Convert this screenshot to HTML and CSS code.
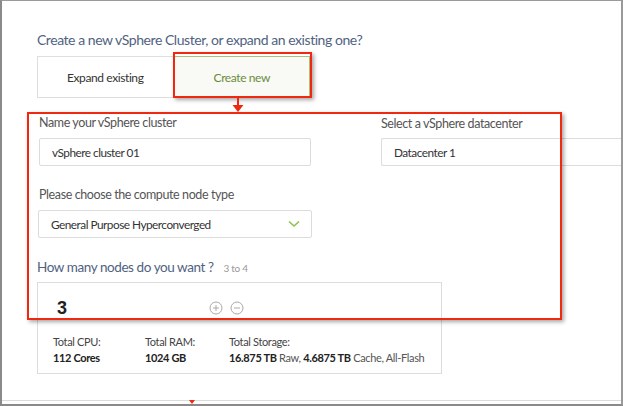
FILE: index.html
```html
<!DOCTYPE html>
<html>
<head>
<meta charset="utf-8">
<link rel="stylesheet" href="styles.css">
</head>
<body>
<div class="frame">
  <div class="content">
    <h1 class="title">Create a new vSphere Cluster, or expand an existing one?</h1>
    <div class="tabs">
      <div class="tab">Expand existing</div>
      <div class="tab tab-active">Create new</div>
    </div>
    <div class="form">
      <div class="field field-name">
        <label class="label">Name your vSphere cluster</label>
        <div class="input">vSphere cluster 01</div>
      </div>
      <div class="field field-dc">
        <label class="label">Select a vSphere datacenter</label>
        <div class="input input-wide">Datacenter 1</div>
      </div>
      <div class="field field-type">
        <label class="label">Please choose the compute node type</label>
        <div class="input select">
          <span>General Purpose Hyperconverged</span>
          <svg class="chev" width="12" height="8" viewBox="0 0 12 8"><path d="M1 1.5 L6 6 L11 1.5" fill="none" stroke="#8dc24a" stroke-width="1.6"/></svg>
        </div>
      </div>
    </div>
    <div class="nodes-head">
      <span class="nodes-q">How many nodes do you want ?</span>
      <span class="nodes-range">3 to 4</span>
    </div>
    <div class="nodes-box">
      <div class="count-row">
        <span class="count">3</span>
        <div class="steppers">
          <svg width="14" height="14" viewBox="0 0 14 14"><circle cx="7" cy="7" r="6" fill="none" stroke="#aaa" stroke-width="1"/><path d="M4 7 H10 M7 4 V10" stroke="#aaa" stroke-width="1"/></svg>
          <svg width="14" height="14" viewBox="0 0 14 14"><circle cx="7" cy="7" r="6" fill="none" stroke="#aaa" stroke-width="1"/><path d="M4 7 H10" stroke="#aaa" stroke-width="1"/></svg>
        </div>
      </div>
      <div class="stats">
        <div class="stat stat-cpu">
          <div class="stat-label">Total CPU:</div>
          <div class="stat-value"><b>112 Cores</b></div>
        </div>
        <div class="stat stat-ram">
          <div class="stat-label">Total RAM:</div>
          <div class="stat-value"><b>1024 GB</b></div>
        </div>
        <div class="stat">
          <div class="stat-label">Total Storage:</div>
          <div class="stat-value"><b>16.875 TB</b> Raw, <b>4.6875 TB</b> Cache, All-Flash</div>
        </div>
      </div>
    </div>
  </div>
  <div class="bottom-line"></div>

  <div class="hl hl-tab"></div>
  <div class="hl hl-form"></div>
  <svg class="arrow" width="14" height="18" viewBox="0 0 14 18"><path d="M7 0 V9" stroke="#f0280f" stroke-width="2"/><path d="M1.5 8 L12.5 8 L7 15 Z" fill="#f0280f"/></svg>
  <svg class="tick" width="6" height="5" viewBox="0 0 6 5"><path d="M0 0 H6 L3 4 Z" fill="#f0280f"/></svg>
</div>
</body>
</html>
```

FILE: styles.css
```css
* { box-sizing: border-box; }
html, body { margin: 0; padding: 0; background: #fff; }
body { font-family: Lato, "Open Sans", sans-serif; color: #444; }

.frame {
  position: relative;
  width: 623px;
  height: 406px;
  overflow: hidden;
  border-top: 1px solid #9a9a9a;
  border-left: 2px solid #8a8a8a;
  border-right: 2px solid #9a9a9a;
  border-bottom: 2px solid #8a8a8a;
}

.content {
  padding: 31px 0 0 35px;
  height: 399px;
}

.title {
  margin: 0;
  font-size: 14px;
  letter-spacing: -0.45px;
  line-height: 16px;
  font-weight: 400;
  color: #51627f;
}

.tabs {
  display: flex;
  margin-top: 8px;
  width: 273px;
  height: 42px;
}
.tab {
  flex: 1;
  display: flex;
  align-items: center;
  justify-content: center;
  border: 1px solid #dedede;
  font-size: 12px;
  letter-spacing: -0.4px;
  color: #333;
}
.tab-active {
  border-color: #a6c17e;
  background: #f9f9f6;
  color: #6a8c3a;
}

.form {
  display: grid;
  grid-template-columns: 272px 300px;
  column-gap: 70px;
  row-gap: 22px;
  margin-top: 18px;
  margin-left: 2px;
}
.field-type { grid-column: 1; }
.label {
  display: block;
  font-size: 12.5px;
  letter-spacing: -0.4px;
  line-height: 14px;
  color: #555;
  margin-bottom: 8px;
}
.field-dc .label { position: relative; top: 1px; }
.input {
  height: 28px;
  border: 1px solid #dcdcdc;
  border-radius: 2px;
  padding-left: 12px;
  display: flex;
  align-items: center;
  font-size: 11.8px;
  letter-spacing: -0.5px;
  color: #333;
}
.input-wide { width: 260px; border-right: none; }
.select {
  justify-content: space-between;
  padding-right: 11px;
  margin-left: -1px;
  width: 274px;
}
.chev { display: block; }

.nodes-head {
  margin-top: 21px;
  display: flex;
  align-items: baseline;
  gap: 10px;
  line-height: 16px;
}
.nodes-q {
  font-size: 13.5px;
  letter-spacing: -0.42px;
  color: #51627f;
}
.nodes-range {
  font-size: 10px;
  letter-spacing: -0.3px;
  color: #999;
}

.nodes-box {
  margin-top: 6px;
  width: 405px;
  height: 92px;
  border: 1px solid #dcdcdc;
  padding: 0 0 0 15px;
}
.count-row {
  display: flex;
  align-items: center;
  height: 50px;
}
.count {
  font-family: "Liberation Sans", Arial, sans-serif;
  font-weight: 700;
  font-size: 18px;
  color: #222;
  margin-left: 4px;
  width: 152px;
}
.steppers {
  display: flex;
  gap: 7px;
}
.steppers svg { display: block; }

.stats {
  display: flex;
  margin-top: 1px;
}
.stat { font-size: 11px; letter-spacing: -0.35px; line-height: 16px; color: #444; white-space: nowrap; }
.stat-cpu { width: 92px; }
.stat-ram { width: 84px; }
.stat-value b { color: #222; font-weight: 700; }
.stat-value { color: #555; }

.bottom-line {
  height: 1px;
  background: #dcdcdc;
}

.hl {
  position: absolute;
  border: 2px solid #f0280f;
  box-shadow: 2px 2px 4px rgba(0,0,0,0.35);
}
.hl-tab { left: 171px; top: 51px; width: 139px; height: 46px; }
.hl-form { left: 25px; top: 111px; width: 535px; height: 208px; }
.arrow { position: absolute; left: 229px; top: 96px; }
.tick { position: absolute; left: 187px; top: 399px; }
```
